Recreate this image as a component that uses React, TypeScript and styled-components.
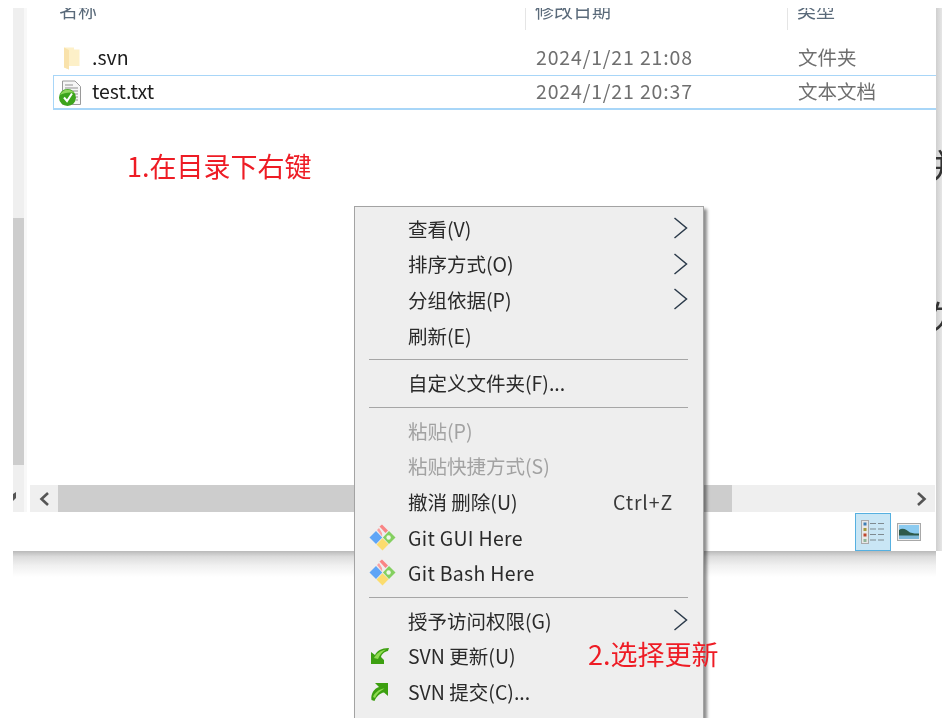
import styled, { createGlobalStyle } from 'styled-components';

const GlobalStyle = createGlobalStyle`
  html, body {
    margin: 0;
    padding: 0;
    background: #fff;
  }

  body {
    font-family: "Noto Sans CJK SC", "Noto Sans", sans-serif;
  }
`;

const Page = styled.div`
  position: relative;
  width: 942px;
  height: 718px;
  padding: 8px 0 0 13px;
  box-sizing: border-box;
  overflow: hidden;
  background: #fff;
  filter: blur(0.35px);
`;

const Explorer = styled.div`
  display: flex;
  width: 929px;
  height: 543px;
`;

const SideTrack = styled.div`
  display: flex;
  flex-direction: column;
  width: 11px;
  height: 504px;
  background: #efefef;
  box-shadow: 3px 0 0 #f8f8f8;
`;

const SideThumb = styled.div`
  width: 100%;
  height: 247px;
  margin-top: 210px;
  background: #cdcdcd;
`;

const SideArrow = styled.svg`
  width: 4px;
  height: 10px;
  margin-top: 27px;
`;

const Content = styled.div`
  display: flex;
  flex-direction: column;
  width: 912px;
`;

const EdgeBand = styled.div`
  width: 6px;
  background: linear-gradient(90deg, #cfcfcf, #e6e6e6);
`;

const columns = `
  display: grid;
  grid-template-columns: 472px 262px 1fr;
  margin-left: 29px;
`;

const HeaderRow = styled.div`
  ${columns}
  height: 22px;
  overflow: hidden;
  margin-bottom: 11px;
`;

const HeaderCell = styled.div<{ $divider?: boolean }>`
  padding-left: ${({ $divider }) => ($divider ? '9px' : '6px')};
  border-left: ${({ $divider }) => ($divider ? '1px solid #e5e5e5' : '0')};
  font-size: 19px;
  line-height: 26px;
  color: #5a6a7a;

  span {
    display: block;
    margin-top: -11px;
  }
`;

const FileRow = styled.div<{ $selected?: boolean }>`
  ${columns}
  height: ${({ $selected }) => ($selected ? '35px' : '34px')};
  box-sizing: border-box;
  align-items: center;
  border: ${({ $selected }) => ($selected ? '1px solid #a8d6f8' : '1px solid transparent')};
  border-bottom-width: ${({ $selected }) => ($selected ? '2px' : '1px')};
  border-right: 0;
`;

const NameCell = styled.div`
  display: flex;
  align-items: center;
  height: 100%;
  padding-left: 5px;
  font-size: 19.5px;
  color: #1c1c1c;
`;

const FileIconSlot = styled.div`
  display: flex;
  justify-content: center;
  align-items: center;
  width: 24px;
  margin-right: 9px;
`;

const FileName = styled.span`
  padding-bottom: 4px;
`;

const MetaCell = styled.div<{ $wide?: boolean }>`
  padding: 0 0 4px 10px;
  font-size: 19.5px;
  color: #6f6f6f;
  white-space: nowrap;
  letter-spacing: ${({ $wide }) => ($wide ? '0.85px' : '0')};
`;

const FileArea = styled.div`
  flex: 1;
`;

const Note = styled.div`
  margin: 39px 0 0 103px;
  font-size: 27px;
  line-height: 34px;
  color: #ee1c25;
`;

const HScroll = styled.div`
  display: flex;
  align-items: stretch;
  height: 27px;
  margin-left: 6px;
  width: 905px;
  background: #efefef;
`;

const ScrollButton = styled.div`
  display: flex;
  align-items: center;
  justify-content: center;
  width: 28px;
`;

const HThumb = styled.div`
  width: 674px;
  background: #cdcdcd;
`;

const Spacer = styled.div`
  flex: 1;
`;

const StatusBar = styled.div`
  display: flex;
  justify-content: flex-end;
  align-items: center;
  height: 39px;
  padding-right: 15px;
  gap: 6px;
`;

const ViewButton = styled.div<{ $active?: boolean }>`
  display: flex;
  align-items: center;
  justify-content: center;
  width: ${({ $active }) => ($active ? '36px' : '24px')};
  height: 38px;
  box-sizing: border-box;
  background: ${({ $active }) => ($active ? '#c9e6f5' : 'transparent')};
  border: ${({ $active }) => ($active ? '1px solid #56b0e0' : '0')};
`;

const ShadowBand = styled.div`
  width: 923px;
  height: 26px;
  background: linear-gradient(180deg, #b9b9b9 0%, #dcdcdc 22%, #f0f0f0 55%, #fff 100%);
`;

const BehindText = styled.div<{ $top: number; $shift: number }>`
  position: absolute;
  left: 936px;
  top: ${({ $top }) => $top}px;
  width: 6px;
  overflow: hidden;
  font-size: 33px;
  line-height: 1.1;
  color: #333;
  white-space: nowrap;
  text-indent: ${({ $shift }) => $shift}px;
`;

const Menu = styled.div`
  position: absolute;
  left: 354px;
  top: 206px;
  width: 350px;
  height: 540px;
  box-sizing: border-box;
  padding-top: 4px;
  background: #eeeeee;
  border: 1px solid #a3a3a3;
  box-shadow: 3px 3px 3px rgba(0, 0, 0, 0.45);
`;

const MenuItem = styled.div<{ $disabled?: boolean }>`
  display: flex;
  align-items: center;
  height: 35.6px;
  box-sizing: border-box;
  padding: 0 15px 1px 14px;
  font-size: 19.5px;
  white-space: nowrap;
  color: ${({ $disabled }) => ($disabled ? '#a2a2a2' : '#2a2a2a')};
`;

const MenuIcon = styled.div`
  display: flex;
  align-items: center;
  justify-content: flex-start;
  width: 39px;
  flex: none;
`;

const Label = styled.div<{ $latin?: boolean }>`
  flex: 1;
  letter-spacing: ${({ $latin }) => ($latin ? '0.3px' : '0')};
`;

const Shortcut = styled.div`
  margin-right: 15px;
  color: #3a3a3a;
  letter-spacing: 0.85px;
`;

const MenuDivider = styled.div`
  height: 1px;
  margin: 6px 15px 5px 14px;
  background: #a6a6a6;
`;

const UpdateNote = styled.div`
  position: absolute;
  left: 588px;
  top: 637px;
  font-size: 27px;
  line-height: 34px;
  color: #ee1c25;
`;

const Chevron = () => (
  <svg width="15" height="22" viewBox="0 0 15 22" fill="none">
    <path d="M1.5 1 L13.5 11 L1.5 21" stroke="#2b3a4a" strokeWidth="1.5" />
  </svg>
);

const GitIcon = () => (
  <svg width="27" height="27" viewBox="0 0 27 27">
    <path d="M7 7 L13.2 13.5 L7 20 L0.5 13.5 Z" fill="#5fa5f6" />
    <path d="M13.5 14.2 L19.6 20.2 L13.5 26.5 L7.5 20.4 Z" fill="#fbdc6e" />
    <path d="M20 7 L26.5 13.5 L20 20 L13.9 13.5 Z" fill="#84d060" />
    <circle cx="19.6" cy="13.5" r="2.2" fill="#eef6e8" />
    <path d="M8 6 L10 4 L13 9 L13.2 12.4 Z" fill="#f9a0a0" />
    <path d="M10.5 2.5 L13 0.5 L19 6.4 L16.5 9 Z" fill="#f98484" />
  </svg>
);

const UpdateIcon = () => (
  <svg width="20" height="20" viewBox="0 0 20 20">
    <path d="M2 6 L6 9 C8 5 12 2 20 2 L19 5 C16 5.5 12.5 8 12 11 L15 14 L15 18 H2 Z" fill="#3c9f10" />
    <path d="M5 12 C7 8 11 4.5 17 3.5 C13 6 10.5 9 9 13 Z" fill="#8fdc50" />
  </svg>
);

const CommitIcon = () => (
  <svg width="20" height="21" viewBox="0 0 20 21">
    <path d="M6 2 H19 V15 L15 11.5 C11 12 7.5 15.5 5.5 20 L2.5 19 C1.5 13 5 7.5 10 6 Z" fill="#3c9f10" />
    <path d="M4 16 C5.5 12 10 8 15.5 7.5 C11 10 8 12.5 6 17 Z" fill="#8fdc50" />
  </svg>
);

const FolderIcon = () => (
  <svg width="17" height="23" viewBox="0 0 17 23">
    <path d="M1 0.5 H11 V2.5 H16.5 V19 H6 V22.5 L1 20.5 Z" fill="#fdf0c8" />
    <path d="M6 3 L1 0.5 V20.5 L6 22.5 Z" fill="#f9e2ab" />
  </svg>
);

const TxtIcon = () => (
  <svg width="24" height="26" viewBox="0 0 24 26">
    <path d="M3.5 1 H16 L21.5 6.5 V24.5 H3.5 Z" fill="#f6f6f6" stroke="#9a9a9a" />
    <path d="M6 5 H14 M6 8 H19 M6 11 H19 M16 14 H19 M17 17 H19 M17 20 H19" stroke="#8f8f8f" />
    <circle cx="8.5" cy="17.5" r="8.5" fill="#3ca41c" />
    <path d="M1 15 A8.5 8.5 0 0 1 15.5 13 C10 12 5 13 1 15 Z" fill="#8fd65e" />
    <path d="M5 17.5 L8 21 L13 13.5" stroke="#fff" strokeWidth="2" fill="none" />
  </svg>
);

const DetailsIcon = () => (
  <svg width="24" height="24" viewBox="0 0 24 24">
    <rect x="0.5" y="0.5" width="7" height="23" fill="#e8e8e8" stroke="#aaa" />
    <rect x="2.5" y="2.5" width="3" height="3" fill="#3d7fb5" />
    <rect x="2.5" y="8" width="3" height="3" fill="#a39a3d" />
    <rect x="2.5" y="13.5" width="3" height="3" fill="#c0462e" />
    <rect x="2.5" y="19" width="3" height="3" fill="#8fb59a" />
    <path d="M9 3.5 H15 M17 3.5 H23 M9 9 H15 M17 9 H23 M9 14.5 H15 M17 14.5 H23 M9 20 H15 M17 20 H23" stroke="#7f8a90" strokeWidth="1.2" />
  </svg>
);

const PictureIcon = () => (
  <svg width="24" height="18" viewBox="0 0 24 18">
    <rect x="0.5" y="0.5" width="23" height="17" fill="#eee" stroke="#a8a8a8" />
    <rect x="2" y="2" width="20" height="14" fill="#8ccbf0" />
    <path d="M2 7 C6 4 10 7 13 9.5 C16 10.5 19 10.5 22 10.5 V13 H2 Z" fill="#2e5a4a" />
    <path d="M2 12.5 H22 V16 H2 Z" fill="#7db8d8" />
  </svg>
);

const ScrollChevron = ({ flip }: { flip?: boolean }) => (
  <svg width="11" height="14" viewBox="0 0 11 14" fill="none" style={flip ? { transform: 'scaleX(-1)' } : undefined}>
    <path d="M2 1 L8.5 7 L2 13" stroke="#555" strokeWidth="2.6" />
  </svg>
);

export default function App() {
  return (
    <>
      <GlobalStyle />
      <Page>
        <Explorer>
          <SideTrack>
            <SideThumb />
            <SideArrow viewBox="0 0 4 10">
              <path d="M0 2 L3 0 V6 L0 9 Z" fill="#555" />
            </SideArrow>
          </SideTrack>
          <Content>
            <HeaderRow>
              <HeaderCell><span>名称</span></HeaderCell>
              <HeaderCell $divider><span>修改日期</span></HeaderCell>
              <HeaderCell $divider><span>类型</span></HeaderCell>
            </HeaderRow>
            <FileArea>
              <FileRow>
                <NameCell>
                  <FileIconSlot><FolderIcon /></FileIconSlot>
                  <FileName>.svn</FileName>
                </NameCell>
                <MetaCell $wide>2024/1/21 21:08</MetaCell>
                <MetaCell>文件夹</MetaCell>
              </FileRow>
              <FileRow $selected>
                <NameCell>
                  <FileIconSlot><TxtIcon /></FileIconSlot>
                  <FileName>test.txt</FileName>
                </NameCell>
                <MetaCell $wide>2024/1/21 20:37</MetaCell>
                <MetaCell>文本文档</MetaCell>
              </FileRow>
              <Note>1.在目录下右键</Note>
            </FileArea>
            <HScroll>
              <ScrollButton><ScrollChevron flip /></ScrollButton>
              <HThumb />
              <Spacer />
              <ScrollButton><ScrollChevron /></ScrollButton>
            </HScroll>
            <StatusBar>
              <ViewButton $active><DetailsIcon /></ViewButton>
              <ViewButton><PictureIcon /></ViewButton>
            </StatusBar>
          </Content>
          <EdgeBand />
        </Explorer>
        <ShadowBand />

        <BehindText $top={146} $shift={-5}>并</BehindText>
        <BehindText $top={298} $shift={-8}>欠</BehindText>

        <Menu>
          <MenuItem><MenuIcon /><Label>查看(V)</Label><Chevron /></MenuItem>
          <MenuItem><MenuIcon /><Label>排序方式(O)</Label><Chevron /></MenuItem>
          <MenuItem><MenuIcon /><Label>分组依据(P)</Label><Chevron /></MenuItem>
          <MenuItem><MenuIcon /><Label>刷新(E)</Label></MenuItem>
          <MenuDivider />
          <MenuItem><MenuIcon /><Label>自定义文件夹(F)...</Label></MenuItem>
          <MenuDivider />
          <MenuItem $disabled><MenuIcon /><Label>粘贴(P)</Label></MenuItem>
          <MenuItem $disabled><MenuIcon /><Label>粘贴快捷方式(S)</Label></MenuItem>
          <MenuItem><MenuIcon /><Label>撤消 删除(U)</Label><Shortcut>Ctrl+Z</Shortcut></MenuItem>
          <MenuItem><MenuIcon><GitIcon /></MenuIcon><Label $latin>Git GUI Here</Label></MenuItem>
          <MenuItem><MenuIcon><GitIcon /></MenuIcon><Label $latin>Git Bash Here</Label></MenuItem>
          <MenuDivider />
          <MenuItem><MenuIcon /><Label>授予访问权限(G)</Label><Chevron /></MenuItem>
          <MenuItem><MenuIcon><UpdateIcon /></MenuIcon><Label>SVN 更新(U)</Label></MenuItem>
          <MenuItem><MenuIcon><CommitIcon /></MenuIcon><Label>SVN 提交(C)...</Label></MenuItem>
        </Menu>
        <UpdateNote>2.选择更新</UpdateNote>
      </Page>
    </>
  );
}
